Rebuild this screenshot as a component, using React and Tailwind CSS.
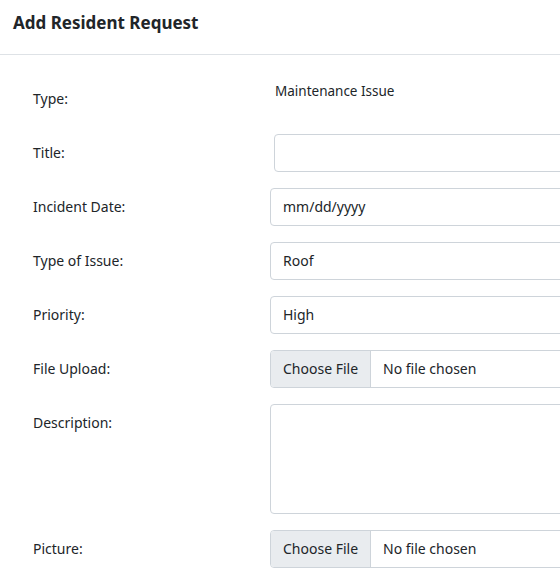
export default function App() {
  const font = { fontFamily: '"Noto Sans", "Open Sans", sans-serif' };
  const label = "w-[237px] shrink-0 h-[38px] flex items-center pb-[1px] text-[14px] text-[#212529]";
  const input = "w-[420px] h-[38px] border border-[#ced4da] rounded-[4px] bg-white flex items-center pb-[1px] px-[12px] text-[14px] text-[#212529]";
  const fileInput = (
    <div className="w-[420px] h-[38px] border border-[#ced4da] rounded-[4px] bg-white flex items-stretch text-[14px] text-[#212529] overflow-hidden">
      <div className="w-[100px] bg-[#e9ecef] border-r border-[#ced4da] flex items-center pb-[1px] pl-[12px]">Choose File</div>
      <div className="flex items-center pb-[1px] pl-[12px]">No file chosen</div>
    </div>
  );
  return (
    <div className="w-[560px] h-[577px] overflow-hidden bg-white" style={font}>
      <div className="w-[800px]">
        <div className="h-[55px] border-b border-[#dee2e6] pl-[13px] pt-[8px]">
          <h5 className="text-[17px] leading-[30px] font-bold text-[#212529]">Add Resident Request</h5>
        </div>
        <div className="pt-[25px] pl-[33px] flex flex-col gap-[16px]">
          <div className="flex">
            <div className={label}>Type:</div>
            <div className="pl-[5px] pt-[1px] text-[13.5px] leading-[21px] text-[#212529]">Maintenance Issue</div>
          </div>
          <div className="flex">
            <div className={label}>Title:</div>
            <div className={input + " ml-[4px]"}></div>
          </div>
          <div className="flex">
            <div className={label}>Incident Date:</div>
            <div className={input}>mm/dd/yyyy</div>
          </div>
          <div className="flex">
            <div className={label}>Type of Issue:</div>
            <div className={input}>Roof</div>
          </div>
          <div className="flex">
            <div className={label}>Priority:</div>
            <div className={input}>High</div>
          </div>
          <div className="flex">
            <div className={label}>File Upload:</div>
            {fileInput}
          </div>
          <div className="flex">
            <div className={label}>Description:</div>
            <div className="w-[420px] h-[110px] border border-[#ced4da] rounded-[4px] bg-white"></div>
          </div>
          <div className="flex">
            <div className={label}>Picture:</div>
            {fileInput}
          </div>
        </div>
      </div>
    </div>
  );
}
